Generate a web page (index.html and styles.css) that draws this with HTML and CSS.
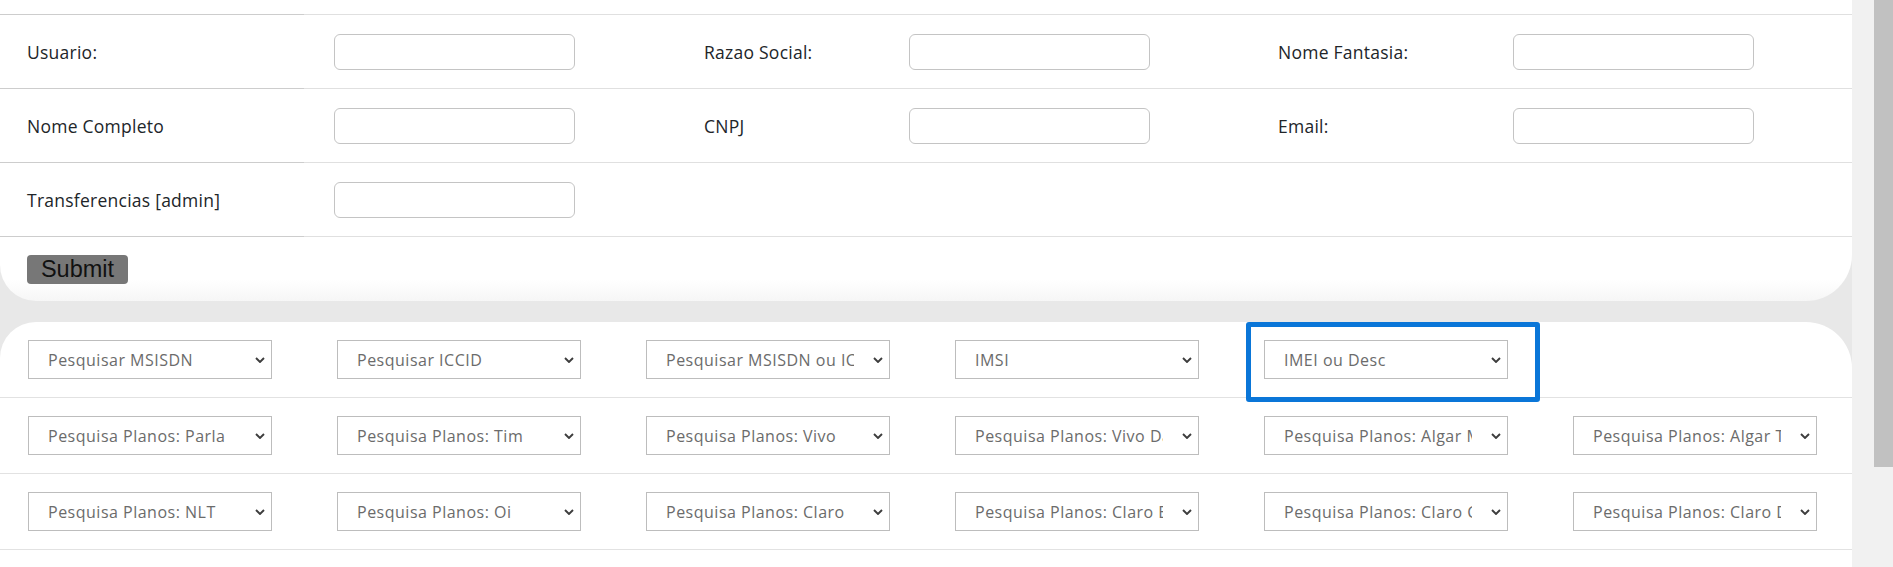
FILE: index.html
```html
<!DOCTYPE html>
<html lang="pt">
<head>
<meta charset="utf-8">
<title>Pesquisa</title>
<link rel="stylesheet" href="styles.css">
</head>
<body>
<div class="main">
  <form class="card card-top">
    <div class="form-grid">
      <div class="cell first tail"></div><div class="cell tail"></div><div class="cell tail"></div><div class="cell tail"></div><div class="cell tail"></div><div class="cell tail"></div>

      <div class="cell first"><label class="lbl">Usuario:</label></div>
      <div class="cell in"><input class="txt" type="text"></div>
      <div class="cell"><label class="lbl">Razao Social:</label></div>
      <div class="cell"><input class="txt" type="text"></div>
      <div class="cell"><label class="lbl">Nome Fantasia:</label></div>
      <div class="cell"><input class="txt" type="text"></div>

      <div class="cell first"><label class="lbl">Nome Completo</label></div>
      <div class="cell in"><input class="txt" type="text"></div>
      <div class="cell"><label class="lbl">CNPJ</label></div>
      <div class="cell"><input class="txt" type="text"></div>
      <div class="cell"><label class="lbl">Email:</label></div>
      <div class="cell"><input class="txt" type="text"></div>

      <div class="cell first"><label class="lbl">Transferencias [admin]</label></div>
      <div class="cell in"><input class="txt" type="text"></div>
      <div class="cell"></div><div class="cell"></div><div class="cell"></div><div class="cell"></div>
    </div>
    <div class="submit-row"><button class="submit" type="button">Submit</button></div>
  </form>

  <div class="card card-bottom">
    <div class="select-grid">
      <div class="scell"><div class="sel"><select><option>Pesquisar MSISDN</option></select><svg class="chev" width="10" height="6" viewBox="0 0 10 6"><polyline points="1,1 5,5 9,1" fill="none" stroke="#3d3d3d" stroke-width="1.9"/></svg></div></div>
      <div class="scell"><div class="sel"><select><option>Pesquisar ICCID</option></select><svg class="chev" width="10" height="6" viewBox="0 0 10 6"><polyline points="1,1 5,5 9,1" fill="none" stroke="#3d3d3d" stroke-width="1.9"/></svg></div></div>
      <div class="scell"><div class="sel"><select><option>Pesquisar MSISDN ou ICCID</option></select><svg class="chev" width="10" height="6" viewBox="0 0 10 6"><polyline points="1,1 5,5 9,1" fill="none" stroke="#3d3d3d" stroke-width="1.9"/></svg></div></div>
      <div class="scell"><div class="sel"><select><option>IMSI</option></select><svg class="chev" width="10" height="6" viewBox="0 0 10 6"><polyline points="1,1 5,5 9,1" fill="none" stroke="#3d3d3d" stroke-width="1.9"/></svg></div></div>
      <div class="scell"><div class="sel"><select><option>IMEI ou Desc</option></select><svg class="chev" width="10" height="6" viewBox="0 0 10 6"><polyline points="1,1 5,5 9,1" fill="none" stroke="#3d3d3d" stroke-width="1.9"/></svg></div></div>
      <div class="scell"></div>

      <div class="scell"><div class="sel"><select><option>Pesquisa Planos: Parla</option></select><svg class="chev" width="10" height="6" viewBox="0 0 10 6"><polyline points="1,1 5,5 9,1" fill="none" stroke="#3d3d3d" stroke-width="1.9"/></svg></div></div>
      <div class="scell"><div class="sel"><select><option>Pesquisa Planos: Tim</option></select><svg class="chev" width="10" height="6" viewBox="0 0 10 6"><polyline points="1,1 5,5 9,1" fill="none" stroke="#3d3d3d" stroke-width="1.9"/></svg></div></div>
      <div class="scell"><div class="sel"><select><option>Pesquisa Planos: Vivo</option></select><svg class="chev" width="10" height="6" viewBox="0 0 10 6"><polyline points="1,1 5,5 9,1" fill="none" stroke="#3d3d3d" stroke-width="1.9"/></svg></div></div>
      <div class="scell"><div class="sel"><select><option>Pesquisa Planos: Vivo Dados</option></select><svg class="chev" width="10" height="6" viewBox="0 0 10 6"><polyline points="1,1 5,5 9,1" fill="none" stroke="#3d3d3d" stroke-width="1.9"/></svg></div></div>
      <div class="scell"><div class="sel"><select><option>Pesquisa Planos: Algar M2M</option></select><svg class="chev" width="10" height="6" viewBox="0 0 10 6"><polyline points="1,1 5,5 9,1" fill="none" stroke="#3d3d3d" stroke-width="1.9"/></svg></div></div>
      <div class="scell"><div class="sel"><select><option>Pesquisa Planos: Algar Telecom</option></select><svg class="chev" width="10" height="6" viewBox="0 0 10 6"><polyline points="1,1 5,5 9,1" fill="none" stroke="#3d3d3d" stroke-width="1.9"/></svg></div></div>

      <div class="scell"><div class="sel"><select><option>Pesquisa Planos: NLT</option></select><svg class="chev" width="10" height="6" viewBox="0 0 10 6"><polyline points="1,1 5,5 9,1" fill="none" stroke="#3d3d3d" stroke-width="1.9"/></svg></div></div>
      <div class="scell"><div class="sel"><select><option>Pesquisa Planos: Oi</option></select><svg class="chev" width="10" height="6" viewBox="0 0 10 6"><polyline points="1,1 5,5 9,1" fill="none" stroke="#3d3d3d" stroke-width="1.9"/></svg></div></div>
      <div class="scell"><div class="sel"><select><option>Pesquisa Planos: Claro</option></select><svg class="chev" width="10" height="6" viewBox="0 0 10 6"><polyline points="1,1 5,5 9,1" fill="none" stroke="#3d3d3d" stroke-width="1.9"/></svg></div></div>
      <div class="scell"><div class="sel"><select><option>Pesquisa Planos: Claro Empresas</option></select><svg class="chev" width="10" height="6" viewBox="0 0 10 6"><polyline points="1,1 5,5 9,1" fill="none" stroke="#3d3d3d" stroke-width="1.9"/></svg></div></div>
      <div class="scell"><div class="sel"><select><option>Pesquisa Planos: Claro Controle</option></select><svg class="chev" width="10" height="6" viewBox="0 0 10 6"><polyline points="1,1 5,5 9,1" fill="none" stroke="#3d3d3d" stroke-width="1.9"/></svg></div></div>
      <div class="scell"><div class="sel"><select><option>Pesquisa Planos: Claro Dados</option></select><svg class="chev" width="10" height="6" viewBox="0 0 10 6"><polyline points="1,1 5,5 9,1" fill="none" stroke="#3d3d3d" stroke-width="1.9"/></svg></div></div>
    </div>
    <div class="highlight"></div>
  </div>
</div>
<div class="side"><div class="thumb"></div></div>
</body>
</html>
```

FILE: styles.css
```css
html, body {
  margin: 0;
  padding: 0;
  height: 567px;
  overflow: hidden;
}
body {
  display: flex;
  font-family: "Open Sans", "DejaVu Sans", sans-serif;
  background: #e8e8e8;
}
.main {
  width: 1852px;
  flex: none;
  display: flex;
  flex-direction: column;
  background: #e8e8e8;
}
.side {
  width: 41px;
  flex: none;
  background: #f1f1f1;
  display: flex;
  justify-content: flex-end;
}
.thumb {
  width: 19px;
  height: 467px;
  background: #c1c1c1;
}
.card {
  background: #fff;
  overflow: hidden;
}
.card-top {
  margin: 0;
  height: 301px;
  border-bottom-left-radius: 36px;
  border-bottom-right-radius: 46px;
  background: linear-gradient(to bottom, #fff 0, #fff 280px, #f6f6f6 301px);
  flex: none;
}
.form-grid {
  display: grid;
  grid-template-columns: 304px 373px 205px 369px 235px 1fr;
}
.cell {
  height: 73px;
  border-bottom: 1px solid #e0e0e0;
  display: flex;
  align-items: center;
  padding-left: 27px;
  box-sizing: content-box;
  min-width: 0;
}
.cell.in {
  padding-left: 30px;
}
.cell.first {
  border-bottom-color: #cdcdcd;
}
.cell.tail {
  height: 14px;
}
.lbl {
  font-size: 17.5px;
  letter-spacing: 0.25px;
  color: #212529;
  white-space: nowrap;
}
.txt {
  width: 241px;
  height: 36px;
  box-sizing: border-box;
  border: 1px solid #c4c4c4;
  border-radius: 6px;
  background: #fff;
  margin: 0;
  padding: 0 8px;
}
.submit-row {
  padding: 18px 0 0 27px;
}
.submit {
  width: 101px;
  height: 29px;
  padding: 0;
  border: none;
  border-radius: 4px;
  background: #777;
  color: #111;
  font-family: "Liberation Sans", Arial, sans-serif;
  font-size: 23.5px;
  line-height: 29px;
}
.card-bottom {
  margin-top: 21px;
  flex: 1;
  position: relative;
  border-radius: 36px 46px 0 0;
}
.select-grid {
  display: grid;
  grid-template-columns: repeat(6, 309px);
}
.scell {
  height: 76px;
  border-bottom: 1px solid #e2e2e2;
  display: flex;
  align-items: center;
  padding-left: 28px;
  box-sizing: border-box;
}
.sel {
  position: relative;
  width: 244px;
  height: 39px;
}
.sel select {
  width: 100%;
  height: 100%;
  margin: 0;
  -webkit-appearance: none;
  appearance: none;
  border: 1px solid #bdbdbd;
  border-radius: 0;
  background: #fff;
  padding: 0 35px 0 19px;
  font-family: "Open Sans", "DejaVu Sans", sans-serif;
  font-size: 16px;
  letter-spacing: 0.5px;
  color: #6b6b6b;
  outline: none;
}
.chev {
  position: absolute;
  right: 7px;
  top: 17px;
  pointer-events: none;
}
.highlight {
  position: absolute;
  left: 1246px;
  top: 0;
  width: 294px;
  height: 80px;
  box-sizing: border-box;
  border: 5px solid #0a76d8;
  border-radius: 3px;
  pointer-events: none;
}
```
